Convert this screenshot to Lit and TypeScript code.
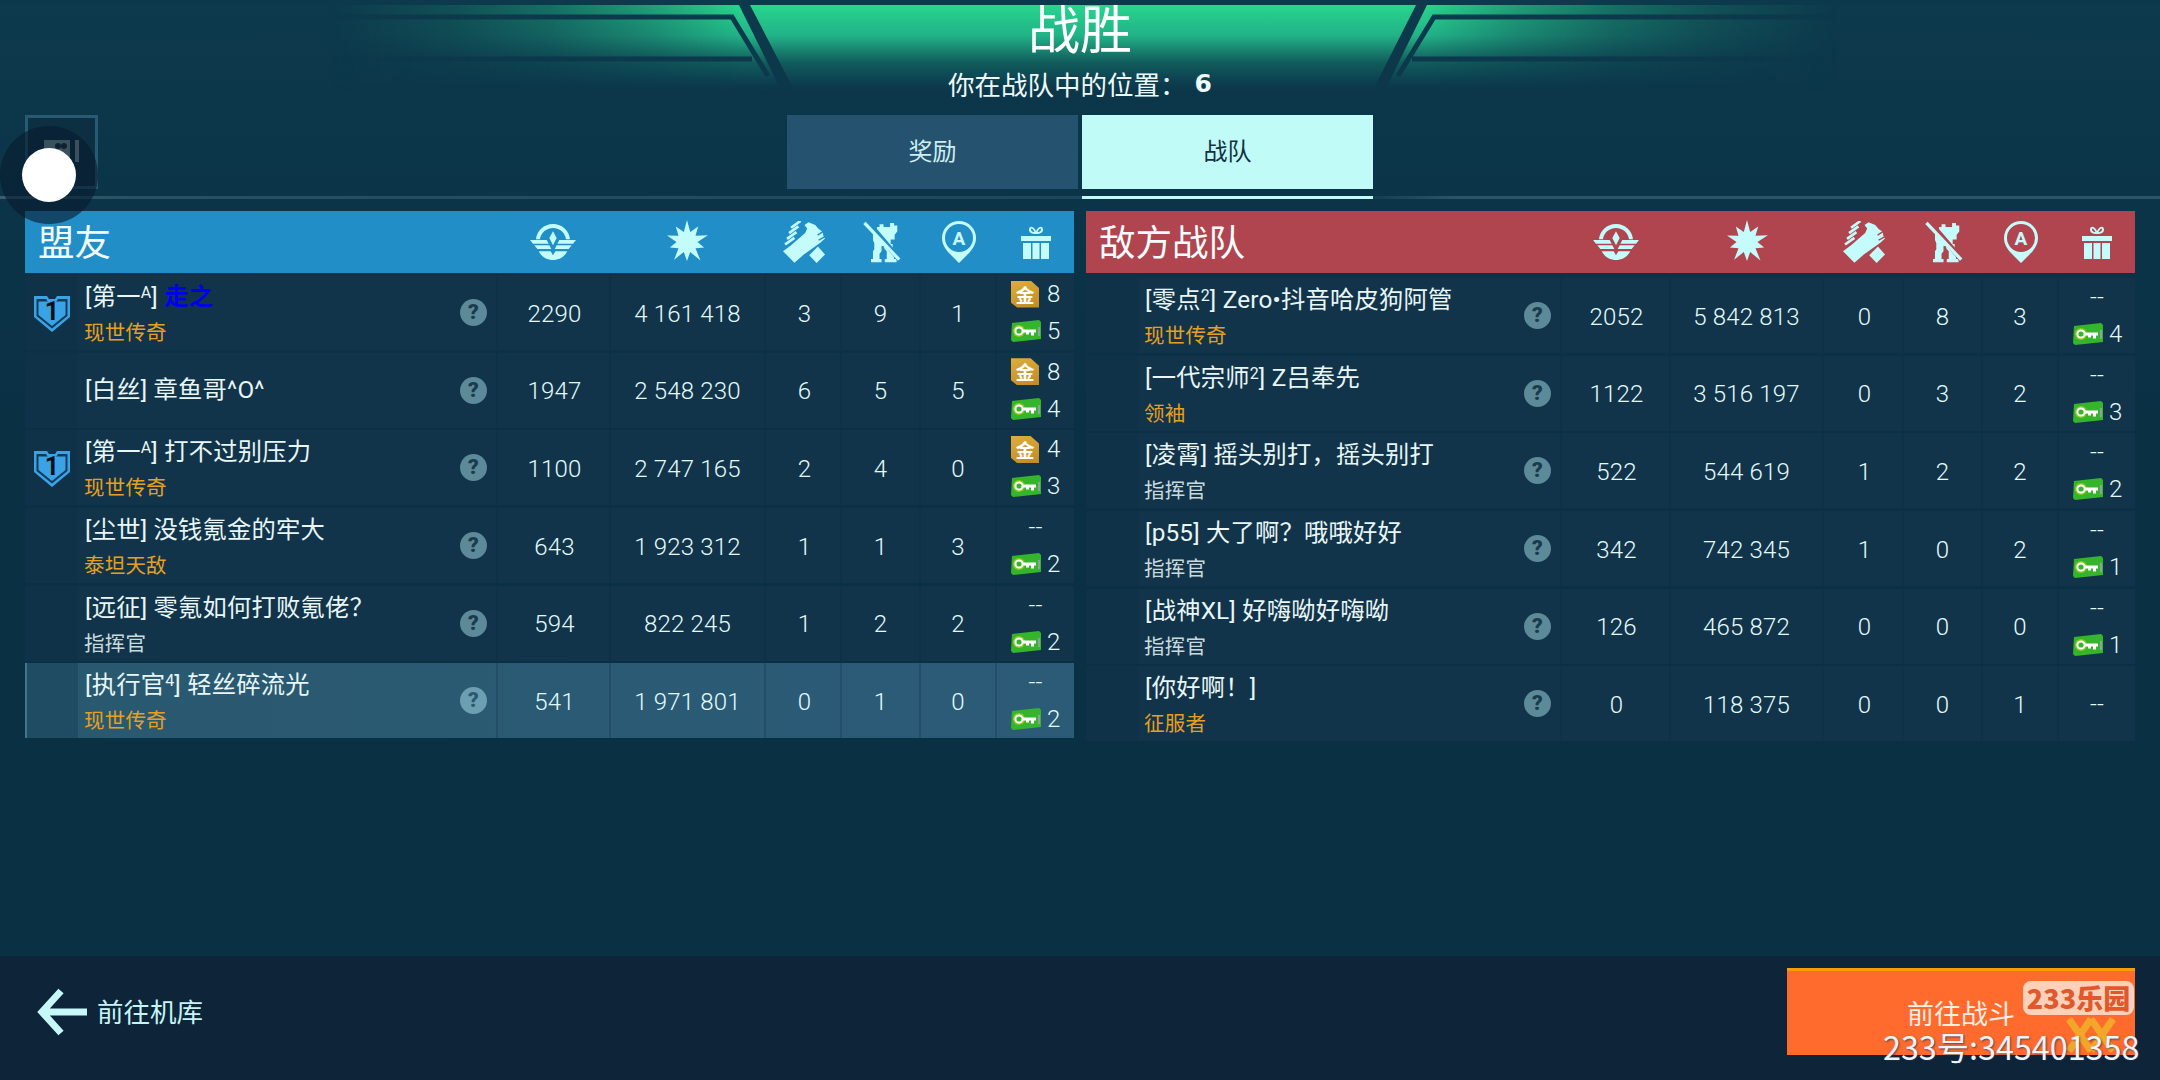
import { LitElement, html, css } from "lit";
import { customElement } from "lit/decorators.js";

type Row = { tag: string; sup?: string; name: string; blue?: boolean; sub?: string; subWhite?: boolean; shield?: boolean; rank: string; dmg: string; a: string; b: string; c: string; gold?: string; key?: string; hl?: boolean };

const allies: Row[] = [
  { tag: "[第一", sup: "A", name: "走之", blue: true, sub: "现世传奇", shield: true, rank: "2290", dmg: "4 161 418", a: "3", b: "9", c: "1", gold: "8", key: "5" },
  { tag: "[白丝", name: "章鱼哥^O^", rank: "1947", dmg: "2 548 230", a: "6", b: "5", c: "5", gold: "8", key: "4" },
  { tag: "[第一", sup: "A", name: "打不过别压力", sub: "现世传奇", shield: true, rank: "1100", dmg: "2 747 165", a: "2", b: "4", c: "0", gold: "4", key: "3" },
  { tag: "[尘世", name: "没钱氪金的牢大", sub: "泰坦天敌", rank: "643", dmg: "1 923 312", a: "1", b: "1", c: "3", key: "2" },
  { tag: "[远征", name: "零氪如何打败氪佬？", sub: "指挥官", subWhite: true, rank: "594", dmg: "822 245", a: "1", b: "2", c: "2", key: "2" },
  { tag: "[执行官", sup: "4", name: "轻丝碎流光", sub: "现世传奇", rank: "541", dmg: "1 971 801", a: "0", b: "1", c: "0", key: "2", hl: true },
];
const enemies: Row[] = [
  { tag: "[零点", sup: "2", name: "Zero•抖音哈皮狗阿管", sub: "现世传奇", rank: "2052", dmg: "5 842 813", a: "0", b: "8", c: "3", key: "4" },
  { tag: "[一代宗师", sup: "2", name: "Z吕奉先", sub: "领袖", rank: "1122", dmg: "3 516 197", a: "0", b: "3", c: "2", key: "3" },
  { tag: "[凌霄", name: "摇头别打，摇头别打", sub: "指挥官", subWhite: true, rank: "522", dmg: "544 619", a: "1", b: "2", c: "2", key: "2" },
  { tag: "[p55", name: "大了啊？哦哦好好", sub: "指挥官", subWhite: true, rank: "342", dmg: "742 345", a: "1", b: "0", c: "2", key: "1" },
  { tag: "[战神XL", name: "好嗨呦好嗨呦", sub: "指挥官", subWhite: true, rank: "126", dmg: "465 872", a: "0", b: "0", c: "0", key: "1" },
  { tag: "[你好啊！", name: "", sub: "征服者", rank: "0", dmg: "118 375", a: "0", b: "0", c: "1" },
];

const starPts = (() => {
  const outer = [22, 19, 22, 18, 23, 19, 22, 18, 21, 19];
  const pts: string[] = [];
  outer.forEach((r, i) => {
    const a0 = -Math.PI / 2 + (i * 2 * Math.PI) / outer.length;
    const a1 = a0 + Math.PI / outer.length;
    pts.push(`${(23 + r * Math.cos(a0)).toFixed(1)},${(22 + r * Math.sin(a0)).toFixed(1)}`);
    pts.push(`${(23 + 10.5 * Math.cos(a1)).toFixed(1)},${(22 + 10.5 * Math.sin(a1)).toFixed(1)}`);
  });
  return pts.join(" ");
})();

const iconRank = html`<svg class="ic lift" width="46" height="36" viewBox="0 0 138 108"><path d="M18 46C20 20 42 0 69 0s49 20 51 46h-12C106 27 90 12 69 12S32 27 30 46Z"/><path d="M69 22l11 20-11 22-11-22Z"/><path d="M0 48h50l6 11H9ZM13 64h45l6 11H22ZM125 64H80l-6 11h42ZM138 48H88l-6 11h47Z"/><path d="M26 82h36l7 12 7-12h36c-8 16-24 26-43 26S34 98 26 82Z"/></svg>`;
const iconStar = html`<svg class="ic lift2" width="46" height="44" viewBox="0 0 46 44"><polygon points=${starPts}/></svg>`;
const iconHands = html`<svg class="ic" width="42" height="42" viewBox="0 0 125 125"><path d="M0 90 24 72 66 36 72 22 64 12 76 4 96 12 106 24 118 32 120 44 125 52 112 64 84 84 62 100 34 124Z"/><path class="gap" d="M120 31 103 42M124 47 106 57" stroke-width="4" fill="none"/><path d="M6 70 34 50M12 53 40 33M18 36 46 16M24 20 52 0" stroke="currentColor" stroke-width="8" fill="none"/><path d="M104 76 125 100 100 125 78 102Z"/></svg>`;
const iconMech = html`<svg class="ic" width="38" height="42" viewBox="0 0 115 128"><path d="M42 18h8v-8h12v8h20V6h12v8h10v18l-8 10v14H84v14h6v16l4 4v26h8v10H66v-10h6V92l-6-6-4-10H56v16l-6 8v16h6v10H24v-10h6V92l4-6V68l-4-10V40l12-6Z"/><path class="gap" d="M14 4l96 112" stroke-width="16" fill="none"/><path d="M4 6l106 112" stroke="currentColor" stroke-width="10" fill="none"/></svg>`;
const iconPin = html`<svg class="ic" width="34" height="42" viewBox="0 0 34 42"><path d="M17 0a17 17 0 0 1 17 17c0 6-3 10-6 14L17 42 6 31C3 27 0 23 0 17A17 17 0 0 1 17 0Zm0 3a14 14 0 1 0 0 28 14 14 0 0 0 0-28Z" fill-rule="evenodd"/><text x="17" y="23.500" text-anchor="middle" class="pina">A</text></svg>`;
const iconGift = html`<svg class="ic" width="30" height="34" viewBox="0 0 30 34"><path d="M15 9C11 9 8 8 8 4.500S12 0 15 6c3-6 7-5 7-1.500S19 9 15 9Zm-1.500-2C12 3.500 10 2.500 10 4.500S12 7 13.500 7Zm3 0C18 7 20 6.500 20 4.500S18 3.500 16.500 7Z" fill-rule="evenodd"/><path d="M0 11h30v5H0ZM2 18h8v16H2ZM11.500 18h7v16h-7ZM20 18h8v16h-8Z"/></svg>`;
const shield = html`<svg class="shield" width="36" height="37" viewBox="0 0 36 37"><path d="M0 1h13l2 3h6l2-3h13v21L18 37 0 22Z" fill="#3aa3e6"/><path d="M2.500 4h9.500l2 3h8l2-3h9.500v17L18 33.500 2.500 21Z" fill="#123a58"/><path d="M4.500 6.500h27V20L18 31 4.500 20Z" fill="#3aa3e6"/><text x="18" y="25" text-anchor="middle" class="one">1</text></svg>`;
const keyIcon = html`<svg class="key" width="30" height="22" viewBox="0 0 30 22"><path d="M1 3 28 0l2 2v17L2 22 0 20Z" fill="#35b52c"/><path d="M27 7h2v9h-2Z" fill="#8fa0a0"/><circle cx="8" cy="11" r="6" fill="#8cc820"/><circle cx="8" cy="11" r="3.600" fill="#35b52c" stroke="#fff" stroke-width="2"/><path d="M12 9.500h13v3h-2v3h-3v-3h-2v2h-3v-2h-3Z" fill="#fff"/></svg>`;

@customElement("app-root")
export class AppRoot extends LitElement {
  static styles = css`
    :host { display: block; width: 2160px; height: 1080px; overflow: hidden; position: relative;
      font-family: Roboto, "Noto Sans CJK SC", sans-serif; color: #e6f6f6; }
    .page { width: 2160px; height: 1080px; display: flex; flex-direction: column; position: relative;
      background: linear-gradient(180deg, #0d3a4c 0, #0b3548 160px, #0a3044 420px, #0a3044 100%); }
    .deco { position: absolute; left: 0; top: 0; }
    .top { position: relative; display: flex; flex-direction: column; align-items: center; height: 115px; }
    .title { font: 400 52px/54px "Noto Sans CJK SC", sans-serif; color: #fff; }
    .subtitle { margin-top: 12px; font: 400 26.500px/36px "Noto Sans CJK SC", sans-serif; color: #eefafa; display: flex; gap: 2px; }
    .subtitle b { font: 700 25px/36px "DejaVu Sans", sans-serif; margin-left: 6px; }
    .tabsrow { position: relative; display: grid; grid-template-columns: 1fr 586px 1fr; height: 74px; }
    .tabs { display: flex; gap: 4px; }
    .tab { flex: 1; display: flex; align-items: center; justify-content: center; padding-bottom: 5px; font: 400 24px "Noto Sans CJK SC", sans-serif; background: #25526f; color: #cdeef2; }
    .tab.on { background: #c0fbf8; color: #123040; }
    .square { margin-left: 25px; width: 73px; height: 74px; box-sizing: border-box; border: 3px solid #2a5a72; background: #0d2f42; display: flex; align-items: center; justify-content: center; }
    .square svg { margin-top: -2px; }
    .rule { margin-top: 7px; height: 3px; display: flex; }
    .rule i { display: block; }
    .rule .l { width: 1082px; background: linear-gradient(90deg, #38606f 0, #285163 130px, #1d475c 100%); }
    .rule .m { width: 291px; background: #c0fbf8; }
    .rule .r { flex: 1; background: linear-gradient(90deg, #143e52 0, #2a5569 80px, #2a5569 100%); }
    .panels { margin-top: 12px; padding: 0 25px; display: flex; gap: 12px; flex: 1; align-items: flex-start; }
    .panel { width: 1049px; display: flex; flex-direction: column; }
    .head, .row { display: grid; }
    .panel.l .head, .panel.l .row { grid-template-columns: 53px 420px 113px 155px 76px 79px 76px 77px; }
    .panel.r .head, .panel.r .row { grid-template-columns: 52px 424px 109px 153px 80px 79px 76px 76px; }
    .head { height: 62px; align-items: center; justify-items: center; color: #c4fbfb; }
    .panel.l .head { background: #228ec8; --hd: #228ec8; }
    .panel.r .head { background: #b0454f; --hd: #b0454f; }
    .head .t { grid-column: 1 / span 2; justify-self: start; margin-left: 13px; padding-bottom: 2px; font: 400 36.500px/1 "Noto Sans CJK SC", sans-serif; color: #f2fcfc; }
    .ic { fill: currentColor; display: block; }
    .lift { margin-right: 3px; }
    .lift2 { margin-right: 4px; }
    .panel.r .lift, .panel.r .lift2 { margin-right: 1px; }
    .gap { stroke: var(--hd); }
    .pina { font: 700 19px Roboto, sans-serif; fill: currentColor; }
    .one { font: 700 25px Roboto, sans-serif; fill: #0a0f18; }
    .rows { display: flex; flex-direction: column; gap: 2.700px; padding-top: 2px; }
    .panel.r .rows { padding-top: 5px; }
    .row { height: 75px; background: #12344a; align-items: stretch; }
    .row.hl { background: linear-gradient(90deg, #29596f, #2c5b78); box-shadow: inset 2px 0 0 #5b94a8; }
    .cell { display: flex; align-items: center; justify-content: center; padding-top: 2px; font-size: 24px; font-weight: 300; letter-spacing: 0.2px; color: #e4fbfb; border-right: 2px solid rgba(8, 38, 56, 0.22); box-sizing: border-box; }
    .cell:last-child { border-right: 0; }
    .cell.st { padding-left: 2px; }
    .cell.ca { padding-left: 3px; }
    .badge { background: rgba(10, 48, 68, 0.3); border-right: 0; padding-top: 2px; }
    .namecell { justify-content: flex-start; padding: 0 9px 0 7px; gap: 8px; }
    .who { flex: 1; display: flex; flex-direction: column; gap: 7px; min-width: 0; }
    .nm { font: 400 24.300px/30px Roboto, "Noto Sans CJK SC", sans-serif; color: #e8f6f6; white-space: pre; }
    .nm sup { font-size: 16px; line-height: 0; vertical-align: 7px; }
    .nm .blue { color: #0000ee; font-weight: 700; }
    .sub { font: 400 20.500px/24px "Noto Sans CJK SC", sans-serif; color: #e6a01e; margin-left: -1px; }
    .sub.w { color: #c9dadd; }
    .q { width: 27px; height: 27px; border-radius: 50%; background: #5c8a98; color: #1a3a4e; display: flex; align-items: center; justify-content: center; font: 900 21px/1 Roboto, sans-serif; }
    .hl .q { background: #6d9fb3; color: #2a5a72; }
    .prize { flex-direction: column; align-items: stretch; padding: 0 0 0 14px; }
    .pl { display: flex; align-items: center; gap: 8px; height: 37px; font-size: 24px; }
    .pl.dash { justify-content: center; padding-right: 14px; }
    .gold { width: 28px; height: 27px; display: flex; align-items: center; justify-content: center; flex: none; background: linear-gradient(160deg, #dfae3c, #c08a25); color: #fff; font: 700 19px/1 "Noto Sans CJK SC", sans-serif; clip-path: polygon(0 0, 70% 0, 100% 28%, 100% 100%, 22% 100%, 0 82%); }
    .key { flex: none; display: block; margin-right: -2px; }
    .foot { height: 124px; background: #0e2439; display: flex; justify-content: space-between; padding: 12px 25px 0 37px; box-sizing: border-box; }
    .back { height: 87px; display: flex; align-items: center; gap: 10px; font: 400 26.500px "Noto Sans CJK SC", sans-serif; color: #c6f4f6; }
    .back span { margin-top: -3px; }
    .go { width: 348px; height: 87px; box-sizing: border-box; border-top: 3px solid #f59e0b; background: #ff6b2d; display: flex; align-items: center; justify-content: center; padding: 0 0 2px 0; font: 400 27px "Noto Sans CJK SC", sans-serif; color: #fdeee4; }
    .touch { position: absolute; left: 0; top: 126px; width: 98px; height: 98px; border-radius: 50%; background: rgba(8, 28, 46, 0.62); display: flex; align-items: center; justify-content: center; }
    .touch i { width: 54px; height: 54px; border-radius: 50%; background: #fff; display: block; }
    .logo { position: absolute; left: 2023px; top: 981px; width: 111px; height: 34px; border-radius: 8px; background: rgba(255, 238, 226, 0.78); color: #e0582c; font: 900 27px/34px "Noto Sans CJK SC", sans-serif; text-align: center; white-space: nowrap; }
    .lattice { position: absolute; left: 2066px; top: 1016px; }
    .wm { position: absolute; left: 1883px; top: 1024px; font: 400 32.300px/44px "Noto Sans CJK SC", sans-serif; color: #eef4fa; text-shadow: 1px 1px 2px rgba(30, 50, 80, 0.7); white-space: nowrap; }
  `;

  private row(r: Row) {
    return html`<div class="row ${r.hl ? "hl" : ""}">
      <div class="cell badge">${r.shield ? shield : ""}</div>
      <div class="cell namecell">
        <div class="who">
          <div class="nm">${r.tag}${r.sup ? html`<sup>${r.sup}</sup>` : ""}]${r.name ? " " : ""}<span class=${r.blue ? "blue" : ""}>${r.name}</span></div>
          ${r.sub ? html`<div class="sub ${r.subWhite ? "w" : ""}">${r.sub}</div>` : ""}
        </div>
        <div class="q">?</div>
      </div>
      <div class="cell st">${r.rank}</div>
      <div class="cell">${r.dmg}</div>
      <div class="cell ca">${r.a}</div>
      <div class="cell">${r.b}</div>
      <div class="cell">${r.c}</div>
      <div class="cell prize">
        ${r.gold ? html`<div class="pl"><span class="gold">金</span>${r.gold}</div>` : html`<div class="pl dash">--</div>`}
        ${r.key ? html`<div class="pl">${keyIcon}${r.key}</div>` : ""}
      </div>
    </div>`;
  }

  private panel(side: string, title: string, rows: Row[]) {
    return html`<section class="panel ${side}">
      <div class="head">
        <div class="t">${title}</div>
        ${iconRank}${iconStar}${iconHands}${iconMech}${iconPin}${iconGift}
      </div>
      <div class="rows">${rows.map((r) => this.row(r))}</div>
    </section>`;
  }

  render() {
    return html`<div class="page">
      <svg class="deco" width="2160" height="110" viewBox="0 0 2160 110">
        <defs>
          <linearGradient id="gv" gradientUnits="userSpaceOnUse" x1="0" y1="5" x2="0" y2="92">
            <stop offset="0" stop-color="#28d58e"/><stop offset=".35" stop-color="#22b287"/><stop offset=".66" stop-color="#115c5c"/><stop offset=".85" stop-color="#0d4452"/><stop offset="1" stop-color="#0c3a4c" stop-opacity="0"/>
          </linearGradient>
          <linearGradient id="ml" gradientUnits="userSpaceOnUse" x1="330" y1="0" x2="740" y2="0"><stop offset="0" stop-color="#000"/><stop offset=".3" stop-color="#262626"/><stop offset=".54" stop-color="#595959"/><stop offset=".78" stop-color="#a6a6a6"/><stop offset="1" stop-color="#fff"/></linearGradient>
          <linearGradient id="mr" gradientUnits="userSpaceOnUse" x1="1426" y1="0" x2="1836" y2="0"><stop offset="0" stop-color="#fff"/><stop offset=".22" stop-color="#a6a6a6"/><stop offset=".46" stop-color="#595959"/><stop offset=".7" stop-color="#262626"/><stop offset="1" stop-color="#000"/></linearGradient>
          <mask id="maskl"><rect width="2160" height="110" fill="url(#ml)"/></mask>
          <mask id="maskr"><rect width="2160" height="110" fill="url(#mr)"/></mask>
        </defs>
        <path d="M0 0h2160v5H0Z" fill="#0c3a4c"/>
        <path d="M750 5H1416L1372 92H795Z" fill="url(#gv)"/>
        <g mask="url(#maskl)">
          <path d="M200 5H739L782 92H200Z" fill="url(#gv)"/>
          <path d="M200 17H732L768 76M200 59H752" fill="none" stroke="#0c3a4c" stroke-width="5"/>
        </g>
        <g mask="url(#maskr)">
          <path d="M1427 5H1966V92H1384Z" fill="url(#gv)"/>
          <path d="M1966 17H1434L1398 76M1966 59H1412" fill="none" stroke="#0c3a4c" stroke-width="5"/>
        </g>
      </svg>
      <div class="top">
        <div class="title">战胜</div>
        <div class="subtitle">你在战队中的位置： <b>6</b></div>
      </div>
      <div class="tabsrow">
        <div><div class="square"><svg width="36" height="22" viewBox="0 0 36 22"><path d="M0 0h26v22H0Z" fill="#8aa9a8"/><circle cx="20" cy="6" r="3" fill="#1a2a30"/><circle cx="14" cy="6" r="3" fill="#1a2a30"/><path d="M31 0h4v22h-4Z" fill="#8aa9a8"/></svg></div></div>
        <div class="tabs"><div class="tab">奖励</div><div class="tab on">战队</div></div>
        <div></div>
      </div>
      <div class="rule"><i class="l"></i><i class="m"></i><i class="r"></i></div>
      <div class="panels">
        ${this.panel("l", "盟友", allies)}
        ${this.panel("r", "敌方战队", enemies)}
      </div>
      <div class="foot">
        <div class="back">
          <svg width="50" height="48" viewBox="0 0 50 48"><path d="M24 3 5 24l19 21M5 24h45" fill="none" stroke="#c6f8fa" stroke-width="7"/></svg>
          <span>前往机库</span>
        </div>
        <div class="go">前往战斗</div>
      </div>
      <div class="touch"><i></i></div>
      <div class="logo">233乐园</div>
      <svg class="lattice" width="50" height="38" viewBox="0 0 50 38"><path d="M3 3 25 35M25 3 3 35M25 3 47 35M47 3 25 35" fill="none" stroke="#f2a72a" stroke-width="7"/></svg>
      <div class="wm">233号:345401358</div>
    </div>`;
  }
}
